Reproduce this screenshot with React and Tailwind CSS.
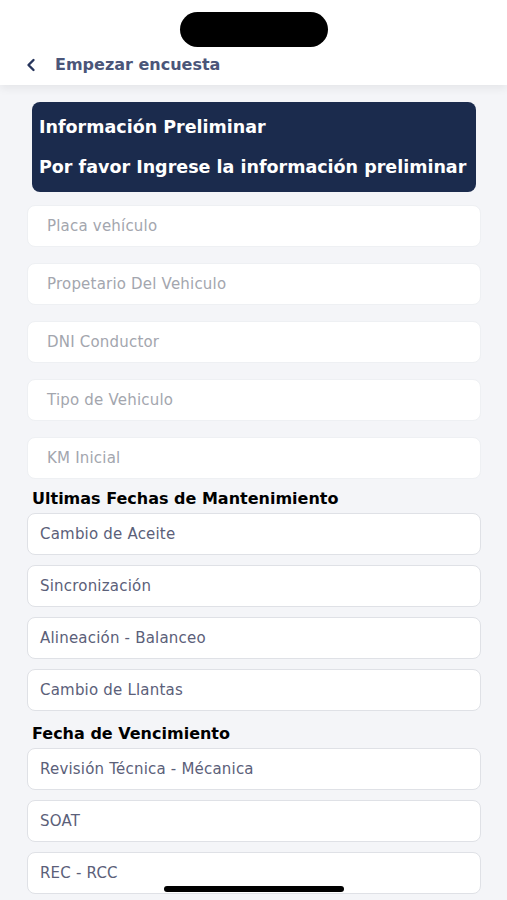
import React from 'react'

const font = { fontFamily: '"DejaVu Sans", Inter, sans-serif' }

function Field({ label, muted }) {
  return (
    <div
      className={`h-[42px] flex items-center rounded-lg bg-white border ${
        muted ? 'border-[#eef0f3] pl-[19px] text-[#a3a6ae]' : 'border-[#dfe1e6] pl-[12px] text-[#5b6079]'
      } text-[15px] tracking-[0.2px]`}
    >
      {label}
    </div>
  )
}

export default function App() {
  const preliminar = ['Placa vehículo', 'Propetario Del Vehiculo', 'DNI Conductor', 'Tipo de Vehiculo', 'KM Inicial']
  const mantenimiento = ['Cambio de Aceite', 'Sincronización', 'Alineación - Balanceo', 'Cambio de Llantas']
  const vencimiento = ['Revisión Técnica - Mécanica', 'SOAT', 'REC - RCC']

  return (
    <div className="relative w-[507px] h-[900px] overflow-hidden bg-[#f4f5f8]" style={font}>
      {/* Header */}
      <div className="relative z-10 h-[85px] bg-white shadow-[0_4px_8px_rgba(0,0,0,0.06)]">
        <div className="flex justify-center pt-[12px]">
          <div className="w-[148px] h-[35px] rounded-full bg-black" />
        </div>
        <div className="flex items-center pl-[26px] pt-[6px]">
          <svg width="10" height="14" viewBox="0 0 10 14" className="mr-[19px]">
            <path d="M7.5 2 L2.5 7 L7.5 12" fill="none" stroke="#27355c" strokeWidth="2.4" strokeLinecap="round" strokeLinejoin="round" />
          </svg>
          <span className="text-[16px] font-bold text-[#4b5679]">Empezar encuesta</span>
        </div>
      </div>

      {/* Body */}
      <div className="px-[27px] pt-[17px] w-[508px]">
        <div className="mx-[5px] h-[90px] rounded-lg bg-[#1b2b4d] px-[7px] flex flex-col justify-center gap-[19px] text-white text-[17.5px] font-bold leading-[21px]">
          <div>Información Preliminar</div>
          <div>Por favor Ingrese la información preliminar</div>
        </div>

        <div className="mt-[13px] flex flex-col gap-[16px]">
          {preliminar.map((l) => (
            <Field key={l} label={l} muted />
          ))}
        </div>

        <div className="mt-[10px] mb-[4px] pl-[5px] text-[16px] font-bold text-black leading-[20px]">
          Ultimas Fechas de Mantenimiento
        </div>
        <div className="flex flex-col gap-[10px]">
          {mantenimiento.map((l) => (
            <Field key={l} label={l} />
          ))}
        </div>

        <div className="mt-[13px] mb-[4px] pl-[5px] text-[16px] font-bold text-black leading-[20px]">
          Fecha de Vencimiento
        </div>
        <div className="flex flex-col gap-[10px]">
          {vencimiento.map((l) => (
            <Field key={l} label={l} />
          ))}
        </div>
      </div>

      {/* Home indicator */}
      <div className="absolute left-[164px] top-[886px] w-[180px] h-[6px] rounded-full bg-black" />
    </div>
  )
}
